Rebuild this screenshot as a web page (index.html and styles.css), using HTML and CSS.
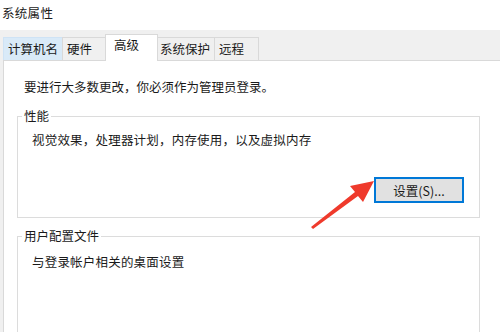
FILE: index.html
```html
<!DOCTYPE html>
<html lang="zh-CN">
<head>
  <meta charset="UTF-8">
  <title>系统属性</title>
  <link rel="stylesheet" href="styles.css">
</head>
<body>
  <div class="window">
    <!-- Заголовок -->
    <div class="titlebar">系统属性</div>

    <div class="dialog">
      <!-- Вкладки -->
      <div class="tabs">
        <div class="tab tab-hover">计算机名</div>
        <div class="tab">硬件</div>
        <div class="tab tab-active">高级</div>
        <div class="tab">系统保护</div>
        <div class="tab">远程</div>
      </div>

      <!-- Страница вкладки -->
      <div class="page">
        <p class="note">要进行大多数更改，你必须作为管理员登录。</p>

        <div class="group group-perf">
          <div class="group-title">性能</div>
          <p class="group-text">视觉效果，处理器计划，内存使用，以及虚拟内存</p>
          <div class="group-actions">
            <button class="btn btn-focus">设置(S)...</button>
          </div>
        </div>

        <div class="group group-profile">
          <div class="group-title">用户配置文件</div>
          <p class="group-text">与登录帐户相关的桌面设置</p>
        </div>
      </div>
    </div>

    <!-- Красная стрелка -->
    <svg class="arrow" width="500" height="332" viewBox="0 0 500 332">
      <polygon points="311,227 355,192 350,186 374,181 363,202 358,196 313,229" fill="#ef3a2c"/>
    </svg>
  </div>
</body>
</html>
```

FILE: styles.css
```css
/* 1. Общие настройки */
* {
  margin: 0;
  padding: 0;
  box-sizing: border-box;
}

body {
  width: 500px;
  height: 332px;
  overflow: hidden;
  font-family: "Noto Sans CJK SC", "Liberation Sans", sans-serif;
  font-size: 12.5px;
  color: #1a1a1a;
  background: #fff;
}

.window {
  position: relative;
  width: 500px;
  height: 332px;
  overflow: hidden;
}

/* 2. Заголовок */
.titlebar {
  height: 30px;
  padding: 5px 0 0 2px;
  line-height: 16px;
  letter-spacing: 0.3px;
  background: #fff;
}

/* 3. Диалог */
.dialog {
  height: 302px;
  padding-left: 3px;
  background: #f0f0f0;
}

/* 4. Вкладки */
.tabs {
  display: flex;
  align-items: flex-end;
  height: 30px;
}

.tab {
  min-width: 45px;
  height: 23px;
  padding: 0 4px 0 4px;
  line-height: 21px;
  background: #f0f0f0;
  border: 1px solid #d9d9d9;
  border-bottom: none;
  margin-left: -1px;
}

.tab:first-child {
  margin-left: 0;
}

.tab-hover {
  min-width: 59px;
  background: #d9eaf8;
  border-color: #cfe3f5;
}

.tab-active {
  position: relative;
  z-index: 1;
  min-width: 53px;
  height: 27px;
  padding: 0 8px 0 8px;
  margin: 0 -2px -1px -2px;
  line-height: 19px;
  background: #fff;
  border-color: #d9d9d9;
}

/* 5. Страница */
.page {
  height: 400px;
  padding: 18px 0 0 13px;
  background: #fff;
  border: 1px solid #d9d9d9;
  border-right: none;
}

.note {
  padding-left: 7px;
  line-height: 16px;
}

/* 6. Группы */
.group {
  width: 463px;
  border: 1px solid #dcdcdc;
  padding: 0 15px 14px 14px;
}

.group-title {
  width: fit-content;
  margin: -9px 0 0 -10px;
  padding: 0 2px;
  line-height: 16px;
  background: #fff;
}

.group-perf {
  margin-top: 21px;
}

.group-profile {
  margin-top: 18px;
  height: 200px;
}

.group-text {
  margin-top: 8px;
  line-height: 16px;
  letter-spacing: 0.2px;
}

.group-profile .group-text {
  margin-top: 10px;
}

.group-actions {
  display: flex;
  justify-content: flex-end;
  margin-top: 29px;
}

/* 7. Кнопка */
.btn {
  width: 90px;
  height: 26px;
  font-family: inherit;
  font-size: 12.5px;
  color: #1a1a1a;
  background: #e1e1e1;
  border: 1px solid #adadad;
}

.btn-focus {
  border: 2px solid #0078d7;
}

/* 8. Стрелка поверх */
.arrow {
  position: absolute;
  top: 0;
  left: 0;
  pointer-events: none;
}
```
